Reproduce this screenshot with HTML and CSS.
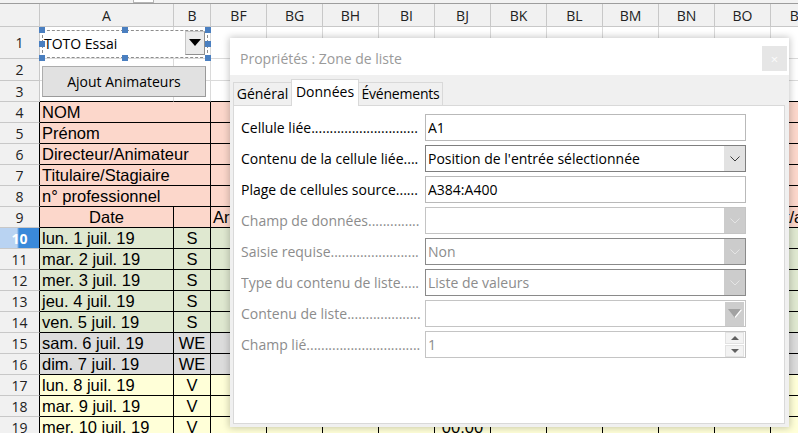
FILE: index.html
```html
<!DOCTYPE html>
<html lang="fr">
<head>
<meta charset="utf-8">
<title>Propriétés : Zone de liste</title>
<link rel="stylesheet" href="styles.css">
</head>
<body>
<div class="topstrip"><div class="topbox"></div></div>
<div class="sheet">
  <div class="row hdr"><div class="rh"></div><div>A</div><div>B</div><div>BF</div><div>BG</div><div>BH</div><div>BI</div><div>BJ</div><div>BK</div><div>BL</div><div>BM</div><div>BN</div><div>BO</div><div>BP</div></div>
  <div class="row plain r1"><div class="rh">1</div><div></div><div></div><div></div><div class="rest"></div></div>
  <div class="row plain r2"><div class="rh">2</div><div></div><div></div><div></div><div class="rest"></div></div>
  <div class="row plain r3"><div class="rh">3</div><div></div><div></div><div></div><div class="rest"></div></div>
  <div class="row pink"><div class="rh">4</div><div class="ab">NOM</div><div></div><div class="rest"></div></div>
  <div class="row pink"><div class="rh">5</div><div class="ab">Prénom</div><div></div><div class="rest"></div></div>
  <div class="row pink"><div class="rh">6</div><div class="ab">Directeur/Animateur</div><div></div><div class="rest"></div></div>
  <div class="row pink"><div class="rh">7</div><div class="ab">Titulaire/Stagiaire</div><div></div><div class="rest"></div></div>
  <div class="row pink"><div class="rh">8</div><div class="ab">n° professionnel</div><div></div><div class="rest"></div></div>
  <div class="row pink"><div class="rh">9</div><div class="ctr">Date</div><div></div><div>Arrivée</div><div class="rest9"></div><div>Ht/an</div></div>
  <div class="row green"><div class="rh sel">10</div><div>lun. 1 juil. 19</div><div class="ctr">S</div><div></div><div class="rest"></div></div>
  <div class="row green"><div class="rh">11</div><div>mar. 2 juil. 19</div><div class="ctr">S</div><div></div><div class="rest"></div></div>
  <div class="row green"><div class="rh">12</div><div>mer. 3 juil. 19</div><div class="ctr">S</div><div></div><div class="rest"></div></div>
  <div class="row green"><div class="rh">13</div><div>jeu. 4 juil. 19</div><div class="ctr">S</div><div></div><div class="rest"></div></div>
  <div class="row green"><div class="rh">14</div><div>ven. 5 juil. 19</div><div class="ctr">S</div><div></div><div class="rest"></div></div>
  <div class="row grey"><div class="rh">15</div><div>sam. 6 juil. 19</div><div class="ctr">WE</div><div></div><div class="rest"></div></div>
  <div class="row grey"><div class="rh">16</div><div>dim. 7 juil. 19</div><div class="ctr">WE</div><div></div><div class="rest"></div></div>
  <div class="row yellow"><div class="rh">17</div><div>lun. 8 juil. 19</div><div class="ctr">V</div><div></div><div class="rest"></div></div>
  <div class="row yellow"><div class="rh">18</div><div>mar. 9 juil. 19</div><div class="ctr">V</div><div></div><div class="rest"></div></div>
  <div class="row yellow"><div class="rh">19</div><div>mer. 10 juil. 19</div><div class="ctr">V</div><div></div><div></div><div></div><div></div><div class="ctr">00:00</div><div class="rest6"></div></div>
</div>

<div class="sc-combo">
  <span class="sc-text">TOTO Essai</span>
  <span class="sc-drop"><svg width="12" height="7" viewBox="0 0 12 7"><path d="M0 0H12L6 7Z" fill="#000"/></svg></span>
  <i class="hd tl"></i><i class="hd tm"></i><i class="hd tr"></i>
  <i class="hd ml"></i><i class="hd mr"></i>
  <i class="hd bl"></i><i class="hd bm"></i><i class="hd br"></i>
</div>
<button class="sc-btn">Ajout Animateurs</button>

<div class="dialog">
  <div class="titlebar"><span class="title">Propriétés : Zone de liste</span><span class="close">×</span></div>
  <div class="tabs">
    <div class="tab t1">Général</div><div class="tab t2 active">Données</div><div class="tab t3">Événements</div>
  </div>
  <div class="page">
    <div class="frow"><div class="lbl"><span>Cellule liée</span><span class="dots">.............................</span></div><div class="fld light"><span class="val">A1</span></div></div>
    <div class="frow"><div class="lbl"><span>Contenu de la cellule liée</span><span class="dots">....</span></div><div class="fld dark"><span class="val">Position de l'entrée sélectionnée</span><span class="btn"><svg width="10" height="6" viewBox="0 0 10 6"><polyline points="0.5,0.5 5,5 9.5,0.5" fill="none" stroke="#3c3c3c"/></svg></span></div></div>
    <div class="frow"><div class="lbl"><span>Plage de cellules source</span><span class="dots">......</span></div><div class="fld light"><span class="val">A384:A400</span></div></div>
    <div class="frow dis"><div class="lbl"><span>Champ de données</span><span class="dots">..............</span></div><div class="fld pale"><span class="val"></span><span class="btn off"><svg width="10" height="6" viewBox="0 0 10 6"><polyline points="0.5,0.5 5,5 9.5,0.5" fill="none" stroke="#e4e4e4"/></svg></span></div></div>
    <div class="frow dis"><div class="lbl"><span>Saisie requise</span><span class="dots">........................</span></div><div class="fld mid"><span class="val">Non</span><span class="btn off"><svg width="10" height="6" viewBox="0 0 10 6"><polyline points="0.5,0.5 5,5 9.5,0.5" fill="none" stroke="#e4e4e4"/></svg></span></div></div>
    <div class="frow dis"><div class="lbl"><span>Type du contenu de liste</span><span class="dots">.....</span></div><div class="fld mid"><span class="val">Liste de valeurs</span><span class="btn off"><svg width="10" height="6" viewBox="0 0 10 6"><polyline points="0.5,0.5 5,5 9.5,0.5" fill="none" stroke="#e4e4e4"/></svg></span></div></div>
    <div class="frow dis"><div class="lbl"><span>Contenu de liste</span><span class="dots">....................</span></div><div class="fld pale"><span class="val"></span><span class="btn tri"><svg width="14" height="9" viewBox="0 0 14 9"><path d="M0 0H14L7 9Z" fill="#a2a2a2"/><path d="M13.5 0.5L7 8.5" stroke="#fff" stroke-width="1.2"/></svg></span></div></div>
    <div class="frow dis"><div class="lbl"><span>Champ lié</span><span class="dots">...............................</span></div><div class="fld pale"><span class="val">1</span><span class="spin"><span class="sp"><svg width="8" height="4" viewBox="0 0 8 4"><path d="M0 4H8L4 0Z" fill="#606060"/></svg></span><span class="sp"><svg width="8" height="4" viewBox="0 0 8 4"><path d="M0 0H8L4 4Z" fill="#606060"/></svg></span></span></div></div>
  </div>
</div>
</body>
</html>
```

FILE: styles.css
```css
* { box-sizing: border-box; margin: 0; padding: 0; }
html, body { width: 798px; height: 433px; overflow: hidden; }
body {
  position: relative;
  background: #fff;
  font-family: "Liberation Sans", Arial, sans-serif;
  color: #000;
}

/* top strip */
.topstrip { height: 4px; background: #f2f2f2; border-bottom: 1px solid #9d9d9d; padding-left: 133px; }
.topbox { width: 21px; height: 3px; border: 1px solid #b5b5b5; border-top: 0; background: #fff; }

/* spreadsheet */
.sheet { width: 827px; }
.row {
  display: grid;
  grid-template-columns: 40px 134px 37px repeat(11, 56px);
  --ln: #000;
  height: 21px;
}
.row > div {
  border-right: 1px solid var(--ln);
  border-bottom: 1px solid var(--ln);
  display: flex;
  align-items: center;
  white-space: nowrap;
  overflow: hidden;
  font-size: 16.5px;
  padding-left: 2px;
}
.row > .ctr { justify-content: center; padding-left: 0; }
.row > .ab { grid-column: span 2; }
.row > .rest {
  grid-column: span 10;
  border-right: 0;
  background-image: repeating-linear-gradient(90deg, transparent 0 55px, var(--ln) 55px 56px);
}
.row > .rest9 {
  grid-column: span 9;
  background-image: repeating-linear-gradient(90deg, transparent 0 55px, var(--ln) 55px 56px);
  border-right: 0;
}
.row > .rest6 {
  grid-column: span 6;
  border-right: 0;
  background-image: repeating-linear-gradient(90deg, transparent 0 55px, var(--ln) 55px 56px);
}
.row > .rh {
  background: #f1f1f1;
  border-bottom-color: #c8c8c8;
  font: 14px "Open Sans", sans-serif;
  color: #222;
  justify-content: center;
  padding-left: 0;
}
.row > .rh.sel {
  background: linear-gradient(90deg, #b9d3f2 0, #b9d3f2 17px, #3a89da 19px, #3a89da 100%);
  color: #fff;
  font-weight: 700;
}

.hdr { height: 23px; --ln: #c8c8c8; background: #f1f1f1; }
.hdr > div { font: 14px "Open Sans", sans-serif; color: #222; justify-content: center; padding-left: 0; }

.plain { --ln: #dadada; background: #fff; }
.plain > .rh { border-right-color: #c8c8c8; }
.r1 { height: 32px; }
.r2 { height: 22px; }
.r3 { height: 21px; }
.r3 > div:not(.rh) { border-bottom-color: #000; }

.pink { background: #fcd7cb; }
.green { background: #dfe8d0; }
.grey { background: #dcdcdc; }
.yellow { background: #ffffd8; }

/* sheet form controls */
.sc-combo {
  position: absolute;
  left: 42px;
  top: 30px;
  width: 166px;
  height: 28px;
  border: 1px dashed #8d8d8d;
  background: #fff;
  display: flex;
  align-items: flex-start;
  font: 14px "Open Sans", sans-serif;
  padding-left: 1px;
}
.sc-text { flex: 1; line-height: 24px; margin-top: 1px; }
.sc-drop {
  width: 20px;
  height: 24px;
  margin-right: 2px;
  background: #ebebeb;
  border: 1px solid #c6c6c6;
  border-right-color: #8f8f8f;
  border-bottom-color: #8f8f8f;
  display: flex;
  align-items: center;
  justify-content: center;
  padding-bottom: 2px;
}
.hd { position: absolute; width: 6px; height: 6px; background: #4a7fc0; }
.hd.tl { left: -4px; top: -4px; }
.hd.tm { left: 79px; top: -4px; }
.hd.tr { right: -4px; top: -4px; }
.hd.ml { left: -4px; top: 10px; }
.hd.mr { right: -4px; top: 10px; }
.hd.bl { left: -4px; bottom: -4px; }
.hd.bm { left: 79px; bottom: -4px; }
.hd.br { right: -4px; bottom: -4px; }

.sc-btn {
  position: absolute;
  left: 42px;
  top: 66px;
  width: 164px;
  height: 31px;
  background: #e1e1e1;
  border: 1px solid #adadad;
  border-right-color: #9a9a9a;
  border-bottom-color: #9a9a9a;
  font: 14px "Open Sans", sans-serif;
  color: #000;
}

/* dialog */
.dialog {
  position: absolute;
  left: 230px;
  top: 38px;
  width: 559px;
  height: 389px;
  background: #f0f0f0;
  box-shadow: 0 0 7px 1px rgba(0, 0, 0, 0.22);
  font: 14px "Open Sans", sans-serif;
  color: #000;
  display: flex;
  flex-direction: column;
}
.titlebar {
  height: 37px;
  background: #fff;
  display: flex;
  align-items: center;
  justify-content: space-between;
  padding: 4px 2px 0 10px;
}
.title { color: #9a9a9a; }
.close {
  width: 25px;
  height: 25px;
  background: #e6e6e6;
  color: #fbfbfb;
  display: flex;
  align-items: center;
  justify-content: center;
  font-size: 13px;
}
.tabs { height: 30px; display: flex; align-items: flex-end; padding-left: 3px; }
.tab {
  height: 23px;
  border: 1px solid #d9d9d9;
  border-bottom: 0;
  background: #f0f0f0;
  margin-right: -1px;
  text-align: center;
  line-height: 21px;
  white-space: nowrap;
}
.t1 { width: 59px; }
.t2 { width: 68px; }
.t3 { width: 85px; letter-spacing: -0.2px; }
.tab.active {
  height: 27px;
  margin-bottom: -1px;
  background: #fff;
  position: relative;
  z-index: 1;
  line-height: 23px;
}
.page {
  height: 319px;
  margin: 0 4px 0 3px;
  background: #fff;
  border: 1px solid #d9d9d9;
  padding: 8px 0 0 7px;
  display: flex;
  flex-direction: column;
  gap: 4px;
}
.frow { display: flex; align-items: center; height: 27px; }
.lbl {
  width: 181px;
  margin-right: 3px;
  display: flex;
  white-space: nowrap;
  overflow: hidden;
}
.dots { overflow: hidden; }
.dis { color: #8c8c8c; }
.fld {
  width: 321px;
  height: 27px;
  border: 1px solid #b9b9b9;
  background: #fff;
  display: flex;
  align-items: center;
  padding-left: 2px;
}
.fld.dark { border-color: #7f7f7f; }
.fld.mid { border-color: #8a8a8a; }
.fld.pale { border-color: #c4c4c4; }
.val { flex: 1; white-space: nowrap; overflow: hidden; }
.btn {
  width: 21px;
  height: 25px;
  background: #e2e2e2;
  display: flex;
  align-items: center;
  justify-content: center;
}
.btn.off { background: #cccccc; }
.btn.tri { width: 19px; height: 24px; margin-right: 1px; background: #cdcdcd; }
.spin {
  width: 19px;
  height: 25px;
  margin-right: 1px;
  display: flex;
  flex-direction: column;
  gap: 1px;
}
.sp {
  flex: 1;
  background: #f3f3f3;
  border: 1px solid #e2e2e2;
  display: flex;
  align-items: center;
  justify-content: center;
}
```
